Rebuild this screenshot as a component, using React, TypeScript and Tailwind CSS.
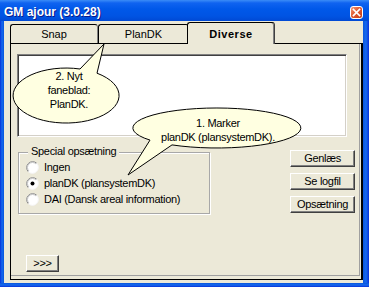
import React from 'react';

const sunkenBox =
  'border border-t-[#808080] border-l-[#808080] border-b-white border-r-white shadow-[inset_1px_1px_0_#404040,inset_-1px_-1px_0_#d4d0c8]';
const raised =
  'border border-t-white border-l-white border-r-[#404040] border-b-[#404040] shadow-[inset_-1px_-1px_0_#808080] bg-[#ece9d8]';

function Radio({ label, checked }: { label: string; checked?: boolean }) {
  return (
    <div className="flex h-[16px] items-center">
      <svg width="13" height="13" viewBox="0 0 13 13" className="shrink-0">
        <circle cx="6.5" cy="6.5" r="6" fill="#fff" />
        <path d="M2.26 10.74 A6 6 0 0 1 10.74 2.26" fill="none" stroke="#8a8a8a" />
        <path d="M10.74 2.26 A6 6 0 0 1 2.26 10.74" fill="none" stroke="#f4f4f4" />
        <path d="M2.96 10.04 A5 5 0 0 1 10.04 2.96" fill="none" stroke="#c4c4c4" />
        {checked && <circle cx="6.5" cy="6.5" r="2" fill="#000" />}
      </svg>
      <span className="ml-[5px] tracking-[-0.3px]">{label}</span>
    </div>
  );
}

function Btn({ children, className = '' }: { children: React.ReactNode; className?: string }) {
  return (
    <button type="button" className={`flex items-center justify-center text-[11px] leading-none tracking-[-0.3px] ${raised} ${className}`}>
      {children}
    </button>
  );
}

export default function App() {
  return (
    <div className="relative h-[287px] w-[369px] overflow-hidden font-['Liberation_Sans',Arial,sans-serif] text-[11px] text-black">
      {/* title bar */}
      <div className="flex h-[21px] items-start justify-between bg-[linear-gradient(to_bottom,#3b8cf7_0px,#0f63f0_3px,#0058e9_9px,#0054e3_16px,#0049d4_21px)]">
        <span className="pl-[4px] pt-[3px] text-[12px] font-bold leading-[18px] text-white [text-shadow:1px_1px_0_#0a1a8a]">
          GM ajour (3.0.28)
        </span>
        <div className="mr-[6px] mt-[6px] flex h-[13px] w-[13px] items-center justify-center rounded-[3px] border border-white bg-[linear-gradient(135deg,#f29a7a,#e05a30_45%,#c33c18)]">
          <svg width="9" height="9" viewBox="0 0 9 9">
            <path d="M1.5 1.5 L7.5 7.5 M7.5 1.5 L1.5 7.5" stroke="#fff" strokeWidth="1.7" strokeLinecap="square" />
          </svg>
        </div>
      </div>

      <div className="flex h-[262px]">
        <div className="w-[4px] bg-[linear-gradient(to_right,#0831d9,#166aee_50%,#0855dd)]" />
        <div className="flex w-[359px] flex-col bg-[#ece9d8] pb-[3px] pl-[6px] pt-[1px]">
          {/* tabs */}
          <div className="flex h-[21px] items-end">
            <div className="flex h-[19px] w-[88px] items-center justify-center rounded-t-[3px] border-l border-t border-r border-l-black border-t-black border-r-[#808080]">
              Snap
            </div>
            <div className="flex h-[19px] w-[91px] items-center justify-center rounded-t-[3px] border-l border-t border-r border-l-black border-t-black border-r-[#808080]">
              PlanDK
            </div>
            <div className="relative z-10 -mb-[1px] -ml-[2px] flex h-[22px] w-[88px] items-center justify-center rounded-t-[3px] border-l border-t border-r border-l-black border-t-black border-r-[#404040] bg-[#ece9d8] pt-[2px] font-bold tracking-[0.5px] shadow-[inset_-1px_0_0_#808080]">
              Diverse
            </div>
          </div>

          {/* tab page */}
          <div className="flex h-[237px] flex-col border border-r-2 border-black">
            <div className="mb-[3px] mr-[1px] flex h-[232px] flex-col border-b border-r border-[#a0a0a0]">
              <div className={`ml-[6px] mt-[10px] h-[83px] w-[330px] bg-white ${sunkenBox}`} />

              <div className="mt-[13px] flex items-start">
                <div className="relative ml-[7px] mt-[2px] h-[62px] w-[192px] border border-[#a8a8a8] pl-[7px] pt-[6px] shadow-[inset_1px_1px_0_#fff,1px_1px_0_#fff]">
                  <span className="absolute -top-[9px] left-[9px] bg-[#ece9d8] px-[3px] leading-[14px] tracking-[-0.3px]">
                    Special opsætning
                  </span>
                  <Radio label="Ingen" />
                  <Radio label="planDK (plansystemDK)" checked />
                  <Radio label="DAI (Dansk areal information)" />
                </div>
                <div className="ml-[80px] flex w-[65px] flex-col gap-[6px]">
                  <Btn className="h-[17px] w-[65px]">Genlæs</Btn>
                  <Btn className="h-[17px] w-[65px]">Se logfil</Btn>
                  <Btn className="h-[17px] w-[65px]">Opsætning</Btn>
                </div>
              </div>

              <Btn className="ml-[15px] mt-[41px] h-[17px] w-[33px]">&gt;&gt;&gt;</Btn>
            </div>
          </div>
        </div>
        <div className="flex-1 bg-[linear-gradient(to_right,#0855dd,#166aee_50%,#0831d9)]" />
      </div>
      <div className="h-[4px] bg-[linear-gradient(to_bottom,#0855dd,#166aee_50%,#0831d9)]" />

      {/* callout bubbles */}
      <svg className="pointer-events-none absolute left-0 top-0" width="369" height="287" viewBox="0 0 369 287">
        <path d="M97 73.2 A53 27.5 0 1 1 80 69 L104 44 Z" fill="#ffffe1" stroke="#000" strokeWidth="1" />
        <path d="M150 140.1 L128 175 L172 144.9 A84 20 0 1 0 150 140.1 Z" fill="#ffffe1" stroke="#000" strokeWidth="1" />
      </svg>
      <div className="pointer-events-none absolute left-[29px] top-[69px] w-[80px] text-center leading-[14px] tracking-[-0.3px]">
        <div>2. Nyt</div>
        <div>faneblad:</div>
        <div>PlanDK.</div>
      </div>
      <div className="pointer-events-none absolute left-[138px] top-[117px] w-[160px] text-center leading-[13.5px] tracking-[-0.3px]">
        <div>1. Marker</div>
        <div>planDK (plansystemDK).</div>
      </div>
    </div>
  );
}
